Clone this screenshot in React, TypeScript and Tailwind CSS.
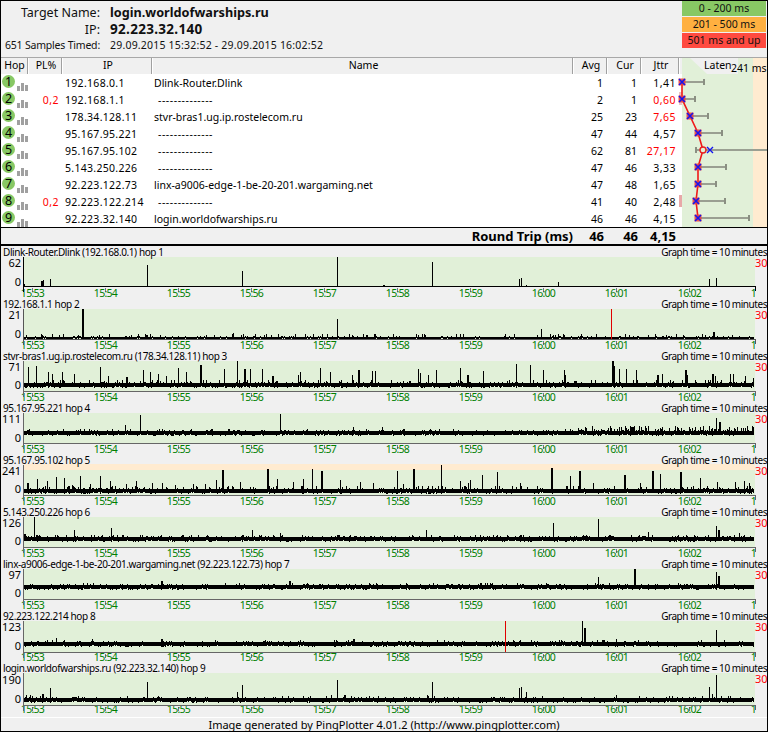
import React from "react";

type Spike = [number, number, number?];
type G = {
  label: string; top: number; base: number; thick: number; axis: number; axisColor: string;
  maxL: string; maxY: number; zeroY: number; prob: number; noise: number; seed: number;
  spikes: Spike[]; red?: number; orange?: boolean; noisy?: [number, number, number, number];
};

const graphs: G[] = [
  { label: "Dlink-Router.Dlink (192.168.0.1) hop 1", top: 257, base: 286, thick: 0, axis: 286, axisColor: "#000", maxL: "62", maxY: 263, zeroY: 282, prob: 0, noise: 0, seed: 1,
    spikes: [[24,284],[41,281,2],[43,280],[50,279],[147,265],[242,271],[337,257],[432,262],[383,285,2],[519,279],[521,278],[526,285],[558,282],[709,279],[716,278]] },
  { label: "192.168.1.1 hop 2", top: 309, base: 337, thick: 2, axis: 339, axisColor: "#555", maxL: "21", maxY: 315, zeroY: 334, prob: 0.13, noise: 3, seed: 7, red: 611,
    spikes: [[82,309,2],[337,319],[541,329],[713,332,2],[232,334],[233,333]] },
  { label: "stvr-bras1.ug.ip.rostelecom.ru (178.34.128.11) hop 3", top: 361, base: 383, thick: 4, axis: 391, axisColor: "#666", maxL: "71", maxY: 367, zeroY: 385, prob: 0.16, noise: 3, seed: 13,
    spikes: [[28,367],[36,366],[48,372],[52,374],[62,372],[74,374],[100,367],[108,376],[126,377,2],[143,370],[150,372],[158,374],[166,376],[178,368],[186,372],[200,365,2],[224,369],[237,361],[244,369,2],[250,369],[262,369],[272,376,2],[300,372],[298,375],[320,368],[330,372],[352,375],[358,370,2],[372,371],[375,371],[418,369],[420,373],[428,375],[436,370],[460,368],[467,375,2],[483,371],[516,364],[530,365],[543,370],[565,375],[564,370],[612,361,2],[614,366],[619,369],[626,369],[636,370],[657,375,2],[662,374],[685,370,2],[687,375],[712,374,2],[715,376],[730,374],[733,374],[745,376],[753,378]] },
  { label: "95.167.95.221 hop 4", top: 413, base: 431, thick: 4, axis: 443, axisColor: "#666", maxL: "111", maxY: 419, zeroY: 438, prob: 0.1, noise: 2, seed: 21, noisy: [570, 754, 0.45, 5],
    spikes: [[125,425],[140,415],[280,414],[353,427],[382,427],[716,418],[719,422,2],[648,426]] },
  { label: "95.167.95.102 hop 5", top: 465, base: 489, thick: 4, axis: 495, axisColor: "#666", maxL: "241", maxY: 471, zeroY: 489, prob: 0.14, noise: 3, seed: 33, orange: true,
    spikes: [[27,483,2],[37,479],[47,481],[56,477],[64,478],[72,485],[80,476],[90,484],[100,476],[110,481],[126,484],[136,481],[152,483],[162,483],[175,485],[193,484],[222,470,2],[216,480],[205,484],[240,482],[267,469,2],[277,479],[293,482],[303,479],[312,469],[321,471,2],[340,480],[360,482],[373,483],[397,471],[403,484],[413,469,2],[441,465],[460,481],[470,480],[482,475],[468,483],[497,472],[520,483],[551,468,2],[570,476],[579,471,2],[593,483],[624,475,2],[640,483],[652,471,2],[660,474],[680,472,2],[700,478],[717,482],[735,482],[744,481],[749,483]] },
  { label: "5.143.250.226 hop 6", top: 517, base: 537, thick: 4, axis: 547, axisColor: "#666", maxL: "126", maxY: 523, zeroY: 541, prob: 0.14, noise: 2, seed: 45,
    spikes: [[24,534,2],[34,517],[74,530],[111,528],[252,530],[280,533],[426,530],[553,523],[598,519],[648,532],[716,526],[718,530,2],[739,533]] },
  { label: "linx-a9006-edge-1-be-20-201.wargaming.net (92.223.122.73) hop 7", top: 569, base: 585, thick: 4, axis: 599, axisColor: "#666", maxL: "97", maxY: 575, zeroY: 593, prob: 0.07, noise: 2, seed: 57,
    spikes: [[161,581,2],[289,581,2],[480,583,2],[598,577],[634,569,2],[716,572],[718,576,2]] },
  { label: "92.223.122.214 hop 8", top: 621, base: 642, thick: 4, axis: 652, axisColor: "#666", maxL: "123", maxY: 627, zeroY: 646, prob: 0.05, noise: 2, seed: 69, red: 505,
    spikes: [[56,638],[92,639],[161,639,2],[353,639,2],[513,640],[531,640],[582,621],[584,628,2],[602,640,2],[616,639],[716,630]] },
  { label: "login.worldofwarships.ru (92.223.32.140) hop 9", top: 673, base: 698, thick: 4, axis: 705, axisColor: "#666", maxL: "190", maxY: 680, zeroY: 699, prob: 0.05, noise: 2, seed: 81,
    spikes: [[26,695],[30,695],[42,694,2],[50,688],[147,682],[237,692],[242,685],[331,695],[337,680],[344,695,2],[427,695],[432,682],[519,688],[521,687],[526,692],[616,695],[709,687],[712,694],[716,675],[721,696]] },
];

const DASH = "--------------";
const rows = [
  { n: 1, pl: "", ip: "192.168.0.1", name: "Dlink-Router.Dlink", avg: "1", cur: "1", j: "1,41", hot: false },
  { n: 2, pl: "0,2", ip: "192.168.1.1", name: DASH, avg: "2", cur: "1", j: "0,60", hot: true },
  { n: 3, pl: "", ip: "178.34.128.11", name: "stvr-bras1.ug.ip.rostelecom.ru", avg: "25", cur: "23", j: "7,65", hot: true },
  { n: 4, pl: "", ip: "95.167.95.221", name: DASH, avg: "47", cur: "44", j: "4,57", hot: false },
  { n: 5, pl: "", ip: "95.167.95.102", name: DASH, avg: "62", cur: "81", j: "27,17", hot: true },
  { n: 6, pl: "", ip: "5.143.250.226", name: DASH, avg: "47", cur: "46", j: "3,33", hot: false },
  { n: 7, pl: "", ip: "92.223.122.73", name: "linx-a9006-edge-1-be-20-201.wargaming.net", avg: "47", cur: "48", j: "1,65", hot: false },
  { n: 8, pl: "0,2", ip: "92.223.122.214", name: DASH, avg: "41", cur: "40", j: "2,48", hot: false },
  { n: 9, pl: "", ip: "92.223.32.140", name: "login.worldofwarships.ru", avg: "46", cur: "46", j: "4,15", hot: false },
];

const times = ["15:53","15:54","15:55","15:56","15:57","15:58","15:59","16:00","16:01","16:02","16:03"];
const latency: [number, number, number, number?][] = [
  [682,82,704],[682,99,695],[690,116,708],[698,133,722],[703,150,768,696],[698,167,726],[698,184,716],[696,201,725],[698,218,749],
];

function rand(seed: number) {
  let s = seed * 9301 + 49297;
  return () => { s = (s * 1103515245 + 12345) & 0x7fffffff; return ((s >> 8) & 0xffff) / 65536; };
}

function Plot({ g }: { g: G }) {
  const r = rand(g.seed);
  let d = "";
  if (g.thick) {
    for (let x = 24; x < 754; x += 1) {
      const bump = r() < 0.12 ? 1 : 0;
      d += `M${x} ${g.base + (r() < 0.1 ? -1 : 0)}h1v${g.thick + bump}h-1z`;
      const inNoisy = g.noisy && x >= g.noisy[0] && x <= g.noisy[1];
      const p = inNoisy ? g.noisy![2] : g.prob;
      const h = inNoisy ? g.noisy![3] : g.noise;
      if (r() < p) {
        const t = 1 + Math.floor(r() * h);
        d += `M${x} ${g.base - t}h1v${t}h-1z`;
      }
    }
  }
  for (const [x, y, w] of g.spikes) d += `M${x} ${y}h${w ?? 1}V${g.base + 1}h-${w ?? 1}z`;
  const ticks = times.map((_, i) => 32 + 73 * i).filter((x) => x < 755);
  return (
    <svg className="absolute left-0 top-0" width={768} height={52} viewBox={`0 ${g.top - 11} 768 52`} shapeRendering="crispEdges">
      {g.orange && <rect x={24} y={g.top - 1} width={731} height={6} fill="#ffebd0" />}
      <rect x={24} y={g.orange ? g.top + 5 : g.top} width={731} height={g.orange ? g.axis - g.top - 5 : g.axis - g.top} fill="#e1f0d8" />
      <path d={d} fill="#000" />
      {g.red && <rect x={g.red} y={g.top} width={1} height={g.axis - g.top} fill="#e00000" />}
      <rect x={23} y={g.top} width={1} height={g.axis - g.top + 6} fill={g.axisColor} />
      <rect x={23} y={g.axis} width={732} height={1} fill={g.axisColor} />
      <rect x={755} y={g.axis} width={1} height={5} fill={g.axisColor} />
      {ticks.map((x) => <rect key={x} x={x} y={g.axis + 2} width={1} height={4} fill="#444" opacity={0.7} />)}
      <text x={21} y={g.maxY + 4} textAnchor="end" fontSize={11} fill="#000">{g.maxL}</text>
      <text x={21} y={g.zeroY + 4} textAnchor="end" fontSize={11} fill="#000">0</text>
      <text x={755} y={g.top + 10} fontSize={11} fill="#ff0000">30</text>
    </svg>
  );
}

function Graph({ g }: { g: G }) {
  return (
    <div className="relative h-[52px] w-[768px] font-['Liberation_Sans',sans-serif]">
      <div className="absolute left-0 top-[41px] h-[13px] w-[755px] overflow-hidden">
        <div className="ml-[-4px] flex whitespace-nowrap text-[10.5px] leading-[13px] tracking-[-0.7px] text-[#008000]">
          {times.map((t) => <div key={t} className="w-[73px] shrink-0 text-center">{t}</div>)}
        </div>
      </div>
      <Plot g={g} />
      <div className="absolute left-[3px] top-0 whitespace-nowrap text-[10px] leading-[12px] tracking-[-0.4px] text-black">{g.label}</div>
      <div className="absolute right-[1px] top-0 whitespace-nowrap text-[10px] leading-[12px] tracking-[-0.45px] text-black">Graph time = 10 minutes</div>
    </div>
  );
}

function Marker({ x, y }: { x: number; y: number }) {
  return (
    <g>
      <rect x={x - 3.5} y={y - 3.5} width={7} height={7} fill="#e84040" opacity={0.9} />
      <path d={`M${x - 3} ${y - 3}L${x + 3} ${y + 3}M${x + 3} ${y - 3}L${x - 3} ${y + 3}`} stroke="#1414f0" strokeWidth={1.6} />
    </g>
  );
}

function LatencyChart() {
  const pts = latency.map(([x, y]) => `${x},${y}`).join(" ");
  return (
    <svg className="absolute left-0 top-0" width={768} height={245} viewBox="0 0 768 245">
      <rect x={682} y={58} width={71} height={170} fill="#e1f0d8" shapeRendering="crispEdges" />
      <rect x={753} y={58} width={14} height={170} fill="#ffebd0" shapeRendering="crispEdges" />
      <polygon points="690,58 707,74 738,74 738,58" fill="#f0f0f0" />
      <rect x={679} y={195} width={3} height={12} fill="#e8a8a8" />
      <rect x={679} y={92} width={3} height={13} fill="#eec0c0" />
      {latency.map(([x, y, end, start]) => (
        <g key={y}>
          <rect x={start ?? x} y={y - 1} width={end - (start ?? x)} height={2} fill="#9a9f92" />
          <rect x={end - 1} y={y - 3} width={2} height={6} fill="#8a8f82" />
          {start && <rect x={start - 1} y={y - 3} width={2} height={6} fill="#8a8f82" />}
        </g>
      ))}
      <polyline points={pts} fill="none" stroke="#f01818" strokeWidth={1.6} />
      {latency.map(([x, y], i) => i === 4 ? (
        <g key={y}>
          <circle cx={x} cy={y} r={3} fill="#e1f0d8" stroke="#e82020" strokeWidth={1.4} />
          <path d="M707 147L713 153M713 147L707 153" stroke="#1414f0" strokeWidth={1.4} />
        </g>
      ) : <Marker key={y} x={x} y={y} />)}
    </svg>
  );
}

const Sep = () => <div className="absolute right-0 top-0 h-[16px] w-[2px] border-l border-[#a0a0a0] bg-white" />;

function HeadCell({ className, children }: { className: string; children?: React.ReactNode }) {
  return <div className={`relative flex h-[16px] items-center justify-center ${className}`}>{children}<Sep /></div>;
}

export default function App() {
  return (
    <div className="relative h-[732px] w-[768px] overflow-hidden bg-[#f0f0f0] font-['Noto_Sans',sans-serif] text-[10.5px] text-black">
      {/* header */}
      <div className="absolute left-0 top-0 h-[58px] w-[768px] text-[#111]">
        <div className="absolute right-[668px] top-[4px] whitespace-nowrap text-[12.5px] leading-[17px]">Target Name:</div>
        <div className="absolute left-[110px] top-[4px] whitespace-nowrap text-[12.7px] font-bold leading-[17px]">login.worldofwarships.ru</div>
        <div className="absolute right-[668px] top-[21px] whitespace-nowrap text-[12.5px] leading-[17px]">IP:</div>
        <div className="absolute left-[110px] top-[21px] whitespace-nowrap text-[13.5px] font-bold leading-[17px] tracking-[0.3px]">92.223.32.140</div>
        <div className="absolute right-[668px] top-[38px] whitespace-nowrap text-[10.5px] leading-[15px] tracking-[-0.2px]">651 Samples Timed:</div>
        <div className="absolute left-[110px] top-[38px] whitespace-nowrap text-[10.5px] leading-[15px] tracking-[0.2px]">29.09.2015 15:32:52 - 29.09.2015 16:02:52</div>
        <div className="absolute left-[682px] top-[1px] flex w-[84px] flex-col gap-[1px] text-center text-[10.5px] leading-[15px]">
          <div className="h-[15px] bg-[#88c864]">0 - 200 ms</div>
          <div className="h-[15px] bg-[#ffb040]">201 - 500 ms</div>
          <div className="h-[15px] bg-[#ff4a40]">501 ms and up</div>
        </div>
      </div>

      {/* table header */}
      <div className="absolute left-0 top-[57px] flex h-[17px] w-[768px] border-t border-[#a8a8a8]">
        <HeadCell className="w-[29px]">Hop</HeadCell>
        <HeadCell className="w-[34px]">PL%</HeadCell>
        <HeadCell className="w-[90px]">IP</HeadCell>
        <HeadCell className="w-[421px]">Name</HeadCell>
        <HeadCell className="w-[34px]">Avg</HeadCell>
        <HeadCell className="w-[34px]">Cur</HeadCell>
        <HeadCell className="w-[38px]">Jttr</HeadCell>
      </div>

      {/* table body */}
      <div className="absolute left-0 top-[74px] h-[153px] w-[768px] bg-white">
        {rows.map((r) => (
          <div key={r.n} className="flex h-[17px] items-center whitespace-nowrap pt-[2px]">
            <div className="relative h-[15px] w-[29px] shrink-0">
              <div className="absolute left-[2px] top-[-1px] flex h-[13px] w-[13px] items-center justify-center rounded-full bg-[#88c864] text-[12.5px] leading-[13px]">{r.n}</div>
              <div className="absolute left-[17px] top-[5px] flex h-[10px] items-end gap-[1px]">
                <span className="h-[5px] w-[3px] bg-[#a0a0a0]" />
                <span className="h-[8px] w-[3px] bg-[#a0a0a0]" />
                <span className="h-[6px] w-[3px] bg-[#a0a0a0]" />
              </div>
            </div>
            <div className="w-[30px] shrink-0 text-right tracking-[0.5px] text-[#ff0000]">{r.pl}</div>
            <div className="w-[6px] shrink-0" />
            <div className="w-[89px] shrink-0 tracking-[0.3px]">{r.ip}</div>
            <div className={`w-[418px] shrink-0 ${r.name === DASH ? "pl-[4px] tracking-[0.55px]" : ""}`}>{r.name}</div>
            <div className="w-[31px] shrink-0 text-right">{r.avg}</div>
            <div className="w-[34px] shrink-0 text-right">{r.cur}</div>
            <div className={`w-[39px] shrink-0 text-right tracking-[0.5px] ${r.hot ? "text-[#ff0000]" : ""}`}>{r.j}</div>
          </div>
        ))}
      </div>
      <LatencyChart />
      <div className="absolute left-[704px] top-[57px] whitespace-nowrap leading-[17px]">Laten</div>
      <div className="absolute left-[731px] top-[60px] whitespace-nowrap leading-[17px]">241 ms</div>

      {/* round trip */}
      <div className="absolute left-0 top-[227px] h-[19px] w-[768px] whitespace-nowrap border-t border-b-2 border-black bg-[#f0f0f0] text-[13px] font-bold leading-[16px]">
        <div className="absolute right-[195px] top-0">Round Trip (ms)</div>
        <div className="absolute right-[164px] top-0">46</div>
        <div className="absolute right-[130px] top-0">46</div>
        <div className="absolute right-[92px] top-0">4,15</div>
      </div>

      {/* graphs */}
      <div className="absolute left-0 top-[246px]">
        {graphs.map((g) => <Graph key={g.label} g={g} />)}
      </div>

      {/* footer */}
      <div className="absolute left-0 top-[717px] h-[14px] w-[768px] border-t border-white text-center font-['Liberation_Sans',sans-serif] text-[11px] leading-[14px]">
        Image generated by PingPlotter 4.01.2 (http://www.pingplotter.com)
      </div>

      {/* outer border */}
      <div className="pointer-events-none absolute inset-0 border border-black" />
    </div>
  );
}
